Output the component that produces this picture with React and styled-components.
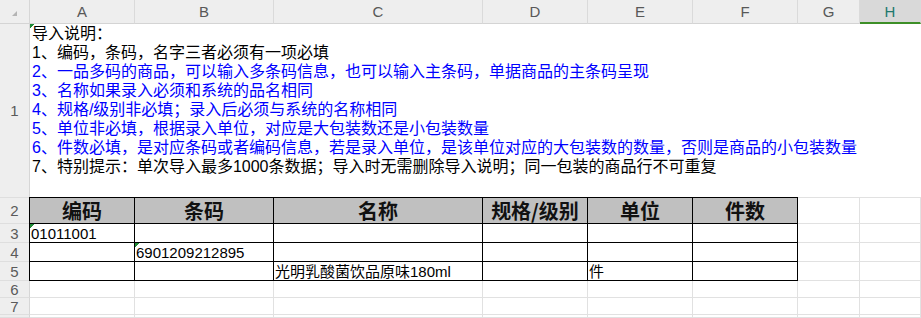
import React from "react";
import styled, { createGlobalStyle, css } from "styled-components";

const GlobalStyle = createGlobalStyle`
  html, body {
    margin: 0;
    padding: 0;
    background: #fff;
    overflow: hidden;
  }
  body {
    font-family: "Liberation Sans", "Noto Sans CJK SC", sans-serif;
  }
`;

const COLS = [
  { key: "A", width: 105 },
  { key: "B", width: 139 },
  { key: "C", width: 209 },
  { key: "D", width: 105 },
  { key: "E", width: 105 },
  { key: "F", width: 105 },
  { key: "G", width: 62 },
  { key: "H", width: 61 },
];

// last row is only the top sliver of row 8 that fits in the window
const ROW_HEIGHTS = [24, 174, 26, 19, 19, 19, 17, 17, 3];

const NOTES = [
  { text: "导入说明：", color: "#000" },
  { text: "1、编码，条码，名字三者必须有一项必填", color: "#000" },
  { text: "2、一品多码的商品，可以输入多条码信息，也可以输入主条码，单据商品的主条码呈现", color: "#0000ff" },
  { text: "3、名称如果录入必须和系统的品名相同", color: "#0000ff" },
  { text: "4、规格/级别非必填；录入后必须与系统的名称相同", color: "#0000ff" },
  { text: "5、单位非必填，根据录入单位，对应是大包装数还是小包装数量", color: "#0000ff" },
  { text: "6、件数必填，是对应条码或者编码信息，若是录入单位，是该单位对应的大包装数的数量，否则是商品的小包装数量", color: "#0000ff" },
  { text: "7、特别提示：单次导入最多1000条数据；导入时无需删除导入说明；同一包装的商品行不可重复", color: "#000" },
];

const TABLE_HEAD = ["编码", "条码", "名称", "规格/级别", "单位", "件数"];

const TABLE_ROWS = [
  [{ t: "01011001", flag: true }, "", "", "", "", ""],
  ["", { t: "6901209212895", flag: true }, "", "", "", ""],
  ["", "", "光明乳酸菌饮品原味180ml", "", "件", ""],
];

const Sheet = styled.div`
  display: grid;
  grid-template-columns: 30px ${COLS.map((c) => c.width + "px").join(" ")};
  grid-template-rows: ${ROW_HEIGHTS.map((h) => h + "px").join(" ")};
  width: 921px;
`;

const Corner = styled.div`
  display: flex;
  align-items: center;
  justify-content: center;
  padding-top: 3px;
  box-sizing: border-box;
  background: #eeeeee;
  border-right: 1px solid #d6d6d6;
  border-bottom: 1px solid #d4d4d4;
`;

const CornerMark = styled.span`
  width: 0;
  height: 0;
  border-left: 5px solid transparent;
  border-bottom: 5px solid #b4b4b4;
`;

const ColHead = styled.div`
  display: flex;
  align-items: center;
  justify-content: center;
  box-sizing: border-box;
  font-size: 15px;
  background: ${(p) => (p.$active ? "#d9d9d9" : "#eeeeee")};
  color: ${(p) => (p.$active ? "#1e7a6e" : "#585858")};
  border-right: 1px solid #dadada;
  border-bottom: ${(p) => (p.$active ? "2px solid #3d8f27" : "1px solid #d4d4d4")};
`;

const RowHead = styled.div`
  display: flex;
  align-items: center;
  justify-content: center;
  box-sizing: border-box;
  font-size: 15px;
  color: #5a5a5a;
  background: #eeeeee;
  border-right: 1px solid #d6d6d6;
  border-bottom: 1px solid #dedede;
`;

const flagged = css`
  background-image: linear-gradient(135deg, #1f8a35 3.5px, transparent 3.5px);
  background-size: 6px 6px;
  background-repeat: no-repeat;
`;

const Notes = styled.div`
  grid-column: 2 / -1;
  box-sizing: border-box;
  padding-left: 2px;
  font-size: 16px;
  line-height: 19px;
  white-space: nowrap;
  border-bottom: 1px solid #e1e1e1;
  ${flagged}
`;

const NoteLine = styled.div`
  color: ${(p) => p.$color};
`;

const Cell = styled.div`
  display: flex;
  align-items: flex-end;
  box-sizing: border-box;
  padding-left: 1px;
  font-size: 15px;
  line-height: 17px;
  color: #000;
  white-space: nowrap;
  overflow: visible;
  border-right: 1px solid ${(p) => (p.$table ? "#000" : "#e1e1e1")};
  border-bottom: 1px solid ${(p) => (p.$table ? "#000" : "#e1e1e1")};
  ${(p) => {
    const s = [];
    if (p.$top) s.push("0 -1px 0 #000");
    if (p.$left) s.push("-1px 0 0 #000");
    if (p.$top && p.$left) s.push("-1px -1px 0 #000");
    return s.length ? `box-shadow: ${s.join(", ")};` : "";
  }}
  ${(p) => p.$flag && flagged}
`;

const HeadCell = styled(Cell)`
  align-items: center;
  justify-content: center;
  padding-left: 0;
  background-color: #c0c0c0;
  font-size: 20px;
  font-weight: bold;
  font-family: "Noto Sans CJK SC", sans-serif;
  color: #111;
`;

const App = () => {
  const plainRow = (n, label = n) => [
    <RowHead key={"r" + n}>{label}</RowHead>,
    ...COLS.map((c) => <Cell key={c.key + n} />),
  ];

  return (
    <>
      <GlobalStyle />
      <Sheet>
        <Corner>
          <CornerMark />
        </Corner>
        {COLS.map((c) => (
          <ColHead key={c.key} $active={c.key === "H"}>
            {c.key}
          </ColHead>
        ))}

        <RowHead>1</RowHead>
        <Notes>
          {NOTES.map((n, i) => (
            <NoteLine key={i} $color={n.color}>
              {n.text}
            </NoteLine>
          ))}
        </Notes>

        <RowHead>2</RowHead>
        {TABLE_HEAD.map((h, i) => (
          <HeadCell key={h} $table $top $left={i === 0}>
            {h}
          </HeadCell>
        ))}
        <Cell />
        <Cell />

        {TABLE_ROWS.map((row, r) => [
          <RowHead key={"rh" + r}>{r + 3}</RowHead>,
          ...row.map((v, i) => {
            const item = typeof v === "string" ? { t: v } : v;
            return (
              <Cell key={r + "-" + i} $table $left={i === 0} $flag={item.flag}>
                {item.t}
              </Cell>
            );
          }),
          <Cell key={r + "-g"} />,
          <Cell key={r + "-h"} />,
        ])}

        {plainRow(6)}
        {plainRow(7)}
        {plainRow(8, "")}
      </Sheet>
    </>
  );
};

export default App;
